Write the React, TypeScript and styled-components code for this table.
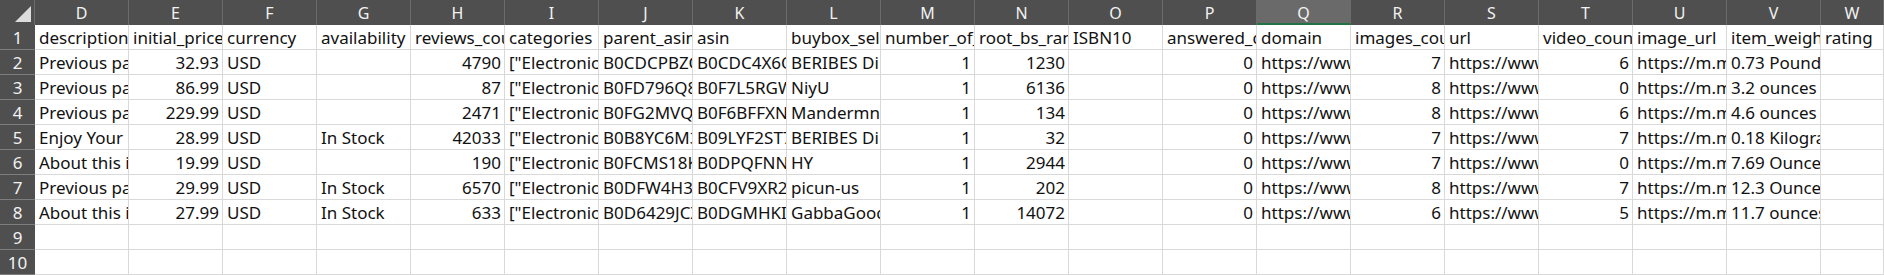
import { Fragment } from 'react';
import styled, { createGlobalStyle } from 'styled-components';

const GlobalStyle = createGlobalStyle`
    body {
        margin: 0;
        background: #ffffff;
        font-family: "Noto Sans", "Open Sans", sans-serif;
    }
`;

const columns = ['D', 'E', 'F', 'G', 'H', 'I', 'J', 'K', 'L', 'M', 'N', 'O', 'P', 'Q', 'R', 'S', 'T', 'U', 'V', 'W'];
const selectedColumn = 'Q';

// columns that hold numbers are right aligned, like a spreadsheet does
const numericColumns = [1, 4, 9, 10, 12, 14, 16];

const header = [
    'description', 'initial_price', 'currency', 'availability', 'reviews_count', 'categories',
    'parent_asin', 'asin', 'buybox_seller', 'number_of_sellers', 'root_bs_rank', 'ISBN10',
    'answered_questions', 'domain', 'images_count', 'url', 'video_count', 'image_url',
    'item_weight', 'rating',
];

const amz = 'https://www.amazon.com/';
const img = 'https://m.media-amazon.com/images/I/';
const cat = '["Electronics","Headphones, Earbuds & Accessories"]';

const rows: string[][] = [
    ['Previous page', '32.93', 'USD', '', '4790', cat, 'B0CDCPBZQ7', 'B0CDC4X6QZ', 'BERIBES Direct', '1', '1230', '', '0', amz, '7', amz, '6', img, '0.73 Pounds', ''],
    ['Previous page', '86.99', 'USD', '', '87', cat, 'B0FD796Q8K', 'B0F7L5RGWD', 'NiyU', '1', '6136', '', '0', amz, '8', amz, '0', img, '3.2 ounces', ''],
    ['Previous page', '229.99', 'USD', '', '2471', cat, 'B0FG2MVQ5T', 'B0F6BFFXNM', 'Mandermn', '1', '134', '', '0', amz, '8', amz, '6', img, '4.6 ounces', ''],
    ['Enjoy Your Music', '28.99', 'USD', 'In Stock', '42033', cat, 'B0B8YC6M3K', 'B09LYF2ST7', 'BERIBES Direct', '1', '32', '', '0', amz, '7', amz, '7', img, '0.18 Kilograms', ''],
    ['About this item', '19.99', 'USD', '', '190', cat, 'B0FCMS18KQ', 'B0DPQFNN', 'HY', '1', '2944', '', '0', amz, '7', amz, '0', img, '7.69 Ounces', ''],
    ['Previous page', '29.99', 'USD', 'In Stock', '6570', cat, 'B0DFW4H3RT', 'B0CFV9XR2L', 'picun-us', '1', '202', '', '0', amz, '8', amz, '7', img, '12.3 Ounces', ''],
    ['About this item', '27.99', 'USD', 'In Stock', '633', cat, 'B0D6429JCX', 'B0DGMHKIQ2', 'GabbaGoods', '1', '14072', '', '0', amz, '6', amz, '5', img, '11.7 ounces', ''],
];

const allRows = [header, ...rows, [], []];

const Sheet = styled.div`
    display: grid;
    grid-template-columns: 35px repeat(19, 94px) 1fr;
    grid-auto-rows: 25px;
    width: 1884px;
    height: 275px;
    overflow: hidden;
`;

const Corner = styled.div`
    position: relative;
    background: #4f4f4f;
    border-right: 1px solid #6b6b6b;

    &::after {
        content: '';
        position: absolute;
        right: 3px;
        bottom: 3px;
        width: 0;
        height: 0;
        border-left: 16px solid transparent;
        border-bottom: 16px solid #dcdcdc;
    }
`;

const ColumnHeader = styled.div<{ $selected?: boolean }>`
    box-sizing: border-box;
    background: ${p => (p.$selected ? '#6a6a6a' : '#4f4f4f')};
    border-right: 1px solid #6b6b6b;
    border-bottom: ${p => (p.$selected ? '2px solid #217346' : 'none')};
    color: #f2f2f2;
    font-size: 16px;
    line-height: 23px;
    padding-top: 2px;
    text-align: center;
`;

const RowHeader = styled.div`
    box-sizing: border-box;
    background: #4f4f4f;
    border-bottom: 1px solid #7d7d7d;
    color: #f2f2f2;
    font-size: 17px;
    line-height: 22px;
    padding-top: 2px;
    text-align: center;
`;

const Cell = styled.div<{ $numeric?: boolean }>`
    box-sizing: border-box;
    border-right: 1px solid #d9d9d9;
    border-bottom: 1px solid #d9d9d9;
    color: #111111;
    font-size: 17px;
    line-height: 24px;
    padding: 1px ${p => (p.$numeric ? '3px' : '0')} 0 ${p => (p.$numeric ? '0' : '4px')};
    text-align: ${p => (p.$numeric ? 'right' : 'left')};
    white-space: nowrap;
    overflow: hidden;
`;

const App = () => {
    return (
        <>
            <GlobalStyle />
            <Sheet>
                <Corner />
                {columns.map(c => (
                    <ColumnHeader key={c} $selected={c === selectedColumn}>{c}</ColumnHeader>
                ))}
                {allRows.map((row, r) => (
                    <Fragment key={r}>
                        <RowHeader>{r + 1}</RowHeader>
                        {columns.map((c, i) => (
                            <Cell key={c} $numeric={r > 0 && numericColumns.includes(i)}>
                                {row[i] ?? ''}
                            </Cell>
                        ))}
                    </Fragment>
                ))}
            </Sheet>
        </>
    );
};

export default App;
